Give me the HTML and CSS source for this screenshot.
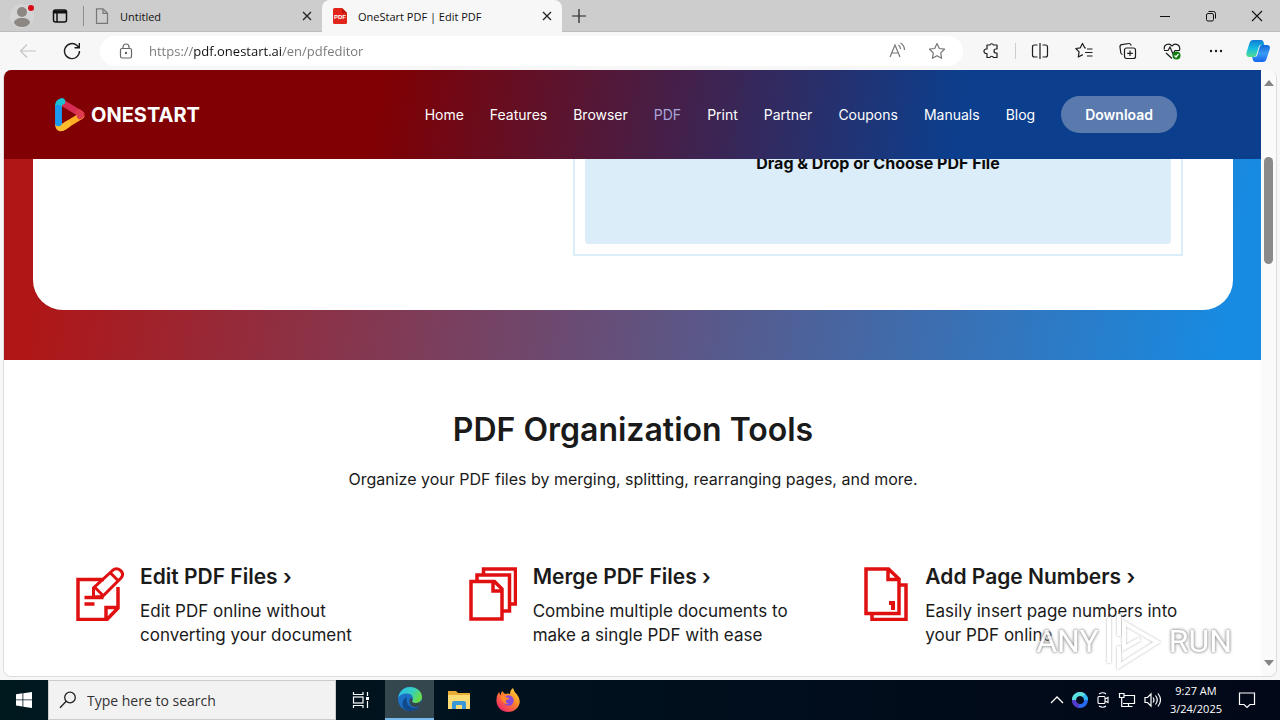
FILE: index.html
```html
<!DOCTYPE html>
<html lang="en">
<head>
<meta charset="utf-8">
<title>OneStart PDF | Edit PDF</title>
<link rel="stylesheet" href="styles.css">
</head>
<body>
<div class="titlebar">
  <button class="profile" aria-label="Profile">
    <svg width="32" height="28" viewBox="0 0 32 28"><circle cx="16" cy="14" r="12" fill="#d4d4d4"/><circle cx="16" cy="10" r="5" fill="#8c8783"/><path d="M8 21c0-3 3-5 8-5s8 2 8 5c-2 3-5 4-8 4s-6-1-8-4z" fill="#8c8783"/><circle cx="25" cy="6" r="3" fill="#d90b17"/></svg>
  </button>
  <button class="tab-actions" aria-label="Tab actions">
    <svg width="16" height="16" viewBox="0 0 16 16" fill="none" stroke="#111" stroke-width="1.5"><rect x="1.5" y="2" width="13" height="12" rx="2"/><path d="M1.500 4h13" stroke-width="3"/><path d="M5 4v10"/></svg>
  </button>
  <span class="divider"></span>
  <div class="tab">
    <svg width="14" height="16" viewBox="0 0 14 16" fill="none" stroke="#777" stroke-width="1.200"><path d="M1.500 .8h6.500l4.500 4.500v10h-11zM8 .8v4.500h4.500"/></svg>
    <span class="tab-title">Untitled</span>
    <button class="close" aria-label="Close tab"><svg width="10" height="10" viewBox="0 0 10 10" stroke="#222" stroke-width="1.300"><path d="M1 1l8 8M9 1l-8 8"/></svg></button>
  </div>
  <div class="tab active">
    <svg width="14" height="16" viewBox="0 0 14 16"><path d="M0 1.500Q0 0 1.500 0H9l5 5v9.500q0 1.500-1.500 1.500h-11Q0 16 0 14.500z" fill="#e1251b"/><path d="M9 0v5h5z" fill="#ba150f"/><text x="7" y="10.500" class="pdf-mark">PDF</text></svg>
    <span class="tab-title">OneStart PDF | Edit PDF</span>
    <button class="close" aria-label="Close tab"><svg width="10" height="10" viewBox="0 0 10 10" stroke="#222" stroke-width="1.300"><path d="M1 1l8 8M9 1l-8 8"/></svg></button>
  </div>
  <button class="new-tab" aria-label="New tab"><svg width="14" height="14" viewBox="0 0 14 14" stroke="#222" stroke-width="1.200"><path d="M7 0v14M0 7h14"/></svg></button>
  <div class="window-controls">
    <button aria-label="Minimize"><svg width="12" height="12" viewBox="0 0 12 12" stroke="#111"><path d="M1 6.500h10"/></svg></button>
    <button aria-label="Restore"><svg width="12" height="12" viewBox="0 0 12 12" fill="none" stroke="#111"><rect x="1.500" y="3.500" width="7" height="7.500" rx="1.500"/><path d="M3.500 1.500h5q2 0 2 2v5"/></svg></button>
    <button aria-label="Close"><svg width="12" height="12" viewBox="0 0 12 12" stroke="#111" stroke-width="1.100"><path d="M1 1l10 10M11 1L1 11"/></svg></button>
  </div>
</div>

<div class="toolbar">
  <button aria-label="Back"><svg width="18" height="16" viewBox="0 0 18 16" fill="none" stroke="#c4c4c4" stroke-width="1.200"><path d="M17 8H2M8 1.500L1.500 8 8 14.500"/></svg></button>
  <button aria-label="Refresh"><svg width="18" height="18" viewBox="0 0 18 18" fill="none" stroke="#1c1c1c" stroke-width="1.400"><path d="M16.500 9a7.500 7.500 0 1 1-2.500-5.500L16 5.500M16.300 1v4.800h-4.800"/></svg></button>
  <div class="address">
    <svg width="14" height="16" viewBox="0 0 14 16" fill="none" stroke="#666" stroke-width="1.200"><rect x="1.500" y="5.500" width="11" height="9.500" rx="1.500"/><path d="M4 5.500V4a3 3 0 0 1 6 0v1.500"/><circle cx="7" cy="10" r=".6" fill="#666"/></svg>
    <input type="text" class="url" aria-label="Address" value="https://pdf.onestart.ai/en/pdfeditor">
    <button aria-label="Read aloud"><svg width="18" height="18" viewBox="0 0 18 18" fill="none" stroke="#767676" stroke-width="1.200"><path d="M2 15L7 3l5 12M4 11h6M10.500 3q2 1.500 2 4M12.500 1q4 2.500 4 7"/></svg></button>
    <button aria-label="Add to favorites"><svg width="18" height="18" viewBox="0 0 18 18" fill="none" stroke="#767676" stroke-width="1.200" stroke-linejoin="round"><path d="M9 1.500l2.300 5 5.200.7-3.800 3.700.9 5.400L9 13.700l-4.600 2.600.9-5.400L1.500 7.200l5.200-.7z"/></svg></button>
  </div>
  <div class="tools">
    <button aria-label="Extensions"><svg width="18" height="18" viewBox="0 0 18 18" fill="none" stroke="#1c1c1c" stroke-width="1.200" stroke-linejoin="round"><path d="M5 3h2.800a2 2 0 0 1 3.700 0H15v4h-1a2 2 0 0 0 0 4h1v4.500h-3.500a2 2 0 0 0-3.700 0H5v-4H4.200a2.200 2.200 0 0 1 0-4.500H5z"/></svg></button>
    <span class="divider light"></span>
    <button aria-label="Split screen"><svg width="18" height="18" viewBox="0 0 18 18" fill="none" stroke="#1c1c1c" stroke-width="1.200"><path d="M6.500 3H3.500Q1.500 3 1.500 5v8q0 2 2 2h3M11.500 3h3q2 0 2 2v8q0 2-2 2h-3M9 1v16"/></svg></button>
    <button aria-label="Favorites"><svg width="18" height="18" viewBox="0 0 18 18" fill="none" stroke="#1c1c1c" stroke-width="1.200" stroke-linejoin="round"><path d="M11 6L9.700 5.800 7.500 1.500 5.300 5.800.8 6.500l3.300 3.300-.8 5.200 4.500-2.400M12 7h5.500M10 10.500h7.500M12 14h5.500"/></svg></button>
    <button aria-label="Collections"><svg width="18" height="18" viewBox="0 0 18 18" fill="none" stroke="#1c1c1c" stroke-width="1.200"><rect x="5.500" y="6" width="11" height="10.500" rx="2"/><path d="M11 8.500v5.500M8.200 11.300h5.600M3.500 12.500Q2 12 1.700 10.500L1 5Q.8 3 2.800 2.700l7-1.200q2-.2 2.400 2.200"/></svg></button>
    <button aria-label="Browser essentials"><svg width="18" height="18" viewBox="0 0 18 18" fill="none" stroke="#1c1c1c" stroke-width="1.200"><path d="M1.500 7.500C0 3 6 0 9 4c3-4 9-1 7.500 4M1 8.500h4L7 5l3 7 2-3.500h5M3 11l6 5.500"/><circle cx="13.500" cy="13.500" r="4" fill="#107c10" stroke="none"/><path d="M11.500 13.500l1.500 1.500 2.500-3" stroke="#fff"/></svg></button>
    <button aria-label="Settings and more"><svg width="18" height="18" viewBox="0 0 18 18" fill="#1c1c1c"><circle cx="4" cy="9" r="1.200"/><circle cx="9" cy="9" r="1.200"/><circle cx="14" cy="9" r="1.200"/></svg></button>
    <button aria-label="Copilot"><svg width="24" height="24" viewBox="0 0 24 24"><defs><linearGradient id="cpa" x2="0" y2="1"><stop stop-color="#107ad5"/><stop offset=".5" stop-color="#16bce0"/><stop offset="1" stop-color="#54dd91"/></linearGradient><linearGradient id="cpb" x2="0" y2="1"><stop stop-color="#0e67d8"/><stop offset=".5" stop-color="#3a9bf5"/><stop offset="1" stop-color="#1667ee"/></linearGradient></defs><path d="M7 1h8q2 0 2.600 2l.7 3h-3q-2 0-2.600 2l-2.300 8q-.6 2-2.600 2H3q-3 0-2.600-4L3.500 4Q4.500 1 7 1z" fill="url(#cpa)"/><path d="M17 23H9.500q-2 0-2.600-2L6.200 18h2.500q2 0 2.600-2l2.300-8q.6-2 2.600-2H21q3.500 0 2.800 4L20.500 20q-1 3-3.500 3z" fill="url(#cpb)"/></svg></button>
  </div>
</div>

<div class="viewport">
  <main class="page">
    <header class="site-header">
      <a href="#" class="logo">
        <svg width="32" height="34" viewBox="0 0 32 34"><g fill="none" stroke-width="6.500" stroke-linecap="round" stroke-linejoin="round"><path d="M8 4.500L27 16" stroke="#d72d55"/><path d="M27 18L8 29.500" stroke="#ffae24"/><path d="M4.500 27V7q0-2.500 3-3.500" stroke="#1b98ef"/><path d="M4.500 8.500q0-4 3.500-5" stroke="#1ac3cf"/><path d="M4.500 27.500q1 4.500 6 1L14 26" stroke="#ffbc2d"/><path d="M4.500 25V10" stroke="#1b98ef"/><path d="M25 14.500q3.500 2 1 3.500" stroke="#e03a50"/></g></svg>
        <span>ONESTART</span>
      </a>
      <nav class="nav">
        <a href="#">Home</a><a href="#">Features</a><a href="#">Browser</a><a href="#" class="current">PDF</a><a href="#">Print</a><a href="#">Partner</a><a href="#">Coupons</a><a href="#">Manuals</a><a href="#">Blog</a>
        <button class="download">Download</button>
      </nav>
    </header>
    <section class="hero">
      <div class="hero-card">
        <div class="drop-frame"><button class="drop-zone">Drag &amp; Drop or Choose PDF File</button></div>
      </div>
    </section>
    <section class="organize">
      <h1>PDF Organization Tools</h1>
      <p class="lead">Organize your PDF files by merging, splitting, rearranging pages, and more.</p>
      <div class="features">
        <article class="feature">
          <svg width="48" height="54" viewBox="0 0 48 54" fill="none" stroke="#e01010" stroke-width="3.500"><path d="M28 12.500H2v40h29L42 41V20M30 52V40.500h12M8.500 30.500h19M8.500 37h10"/><path d="M17.500 30v-9L36.500 3.500q4-3.500 8 0t.5 7.500L26.500 29.500zM34 5.500l8.500 8.500M19 20.500l8 8" stroke-width="3"/></svg>
          <div><h2><a href="#">Edit PDF Files ›</a></h2><p>Edit PDF online without converting your document</p></div>
        </article>
        <article class="feature">
          <svg width="48" height="54" viewBox="0 0 48 54" fill="none" stroke="#e01010" stroke-width="3.500"><path d="M2 14.500h23.500L33 22v30H2zM24 15v9h9M8 14V8h32.500v36H34M14.500 8V2h32v35H41"/></svg>
          <div><h2><a href="#">Merge PDF Files ›</a></h2><p>Combine multiple documents to make a single PDF with ease</p></div>
        </article>
        <article class="feature">
          <svg width="48" height="54" viewBox="0 0 48 54" fill="none" stroke="#e01010" stroke-width="3.500"><path d="M5 2h22.500L38 12v34.500H5zM27 2v10.500h11M39 18h6v34.500H11V47"/><path d="M28 36h4v7" stroke-width="4"/></svg>
          <div><h2><a href="#">Add Page Numbers ›</a></h2><p>Easily insert page numbers into your PDF online</p></div>
        </article>
      </div>
    </section>
  </main>
  <div class="scrollbar">
    <svg width="10" height="6" viewBox="0 0 10 6"><path d="M5 0l5 6H0z" fill="#858585"/></svg>
    <div class="track"><div class="thumb"></div></div>
    <svg width="10" height="6" viewBox="0 0 10 6"><path d="M0 0h10L5 6z" fill="#858585"/></svg>
  </div>
</div>

<div class="taskbar">
  <button class="task" aria-label="Start"><svg width="16" height="16" viewBox="0 0 16 16" fill="#fff"><path d="M0 2.200l6.500-.9v6.200H0zM7.300 1.200L16 0v7.500H7.300zM0 8.300h6.500v6.200L0 13.600zM7.300 8.300H16V16l-8.700-1.300z"/></svg></button>
  <label class="search">
    <svg width="18" height="18" viewBox="0 0 18 18" fill="none" stroke="#222" stroke-width="1.300"><circle cx="11" cy="6.500" r="5.300"/><path d="M7.200 10.300L1 16.800"/></svg>
    <input type="text" placeholder="Type here to search" aria-label="Search">
  </label>
  <button class="task" aria-label="Task view"><svg width="18" height="18" viewBox="0 0 18 18" fill="none" stroke="#fff" stroke-width="1.200"><path d="M1.500 1v2.500h9.500V1M1.500 17v-2.500h9.500V17M15.500 1v4M15.500 10v7"/><rect x="1.500" y="6" width="9.500" height="6"/><path d="M14 7.500h3" stroke-width="3"/></svg></button>
  <button class="task running" aria-label="Microsoft Edge"><svg width="24" height="24" viewBox="0 0 24 24"><defs><linearGradient id="eg" x2="1" y2=".4"><stop stop-color="#2eb8ef"/><stop offset=".6" stop-color="#35cfc0"/><stop offset="1" stop-color="#66dc4c"/></linearGradient></defs><circle cx="12" cy="12" r="12" fill="#1b6fc4"/><path d="M.2 11C1 4.500 6 0 12 0c7 0 12 4.500 12 10 0 4-3 6-6 6-4 0-4.500-1.500-3.500-3 1.500-3-1-6.500-5.500-6.500C4.500 6.500 1 8.500.2 11z" fill="url(#eg)"/><path d="M9 10c-2 5 2 11 8 11 2 0 4-.8 5-1.700C20 22 17 24 12.500 24 6 24 4 19 4.500 16 5 12.500 7 11 9 10z" fill="#114a8b"/><path d="M14.500 13c-1 1.500-.5 3 3.500 3 2.500 0 4.500-1 5.500-3l-.5 5c-2 2-4.500 2.500-7 2-4-.8-5.500-5-4-8 1-1.500 3-1 2.500 1z" fill="#34474e"/></svg></button>
  <button class="task" aria-label="File Explorer"><svg width="22" height="19" viewBox="0 0 22 19"><path d="M0 0h8l2 2h12v16H0z" fill="#e9ad36"/><path d="M0 4h22v14H0z" fill="#fbdb73"/><path d="M4 18V12q0-2 2-2h10q2 0 2 2v6h-4v-4H8v4z" fill="#3a97d8"/></svg></button>
  <button class="task" aria-label="Firefox"><svg width="24" height="24" viewBox="0 0 24 24"><defs><linearGradient id="ff" x1="1" x2=".2" y2="1"><stop stop-color="#ffe83d"/><stop offset=".45" stop-color="#ff8b28"/><stop offset="1" stop-color="#f0206b"/></linearGradient></defs><path d="M3 4l1.500 3L6 3l3 3q3-1 5 0 0-4 3-6 1 4 4 6.500 3.500 4.500 2.500 9C22 21 17.500 24 12 24S1 20 .5 13.500Q0 8 3 4z" fill="url(#ff)"/><circle cx="12.500" cy="12.500" r="5.200" fill="#8848d8"/><path d="M4.500 8q4-1 6 1.500l3 .5q-1 2-3.500 2-1 3 2.500 3.800Q9 17 7 14 5 11.500 4.500 8z" fill="#ff8928"/></svg></button>
  <div class="tray">
    <button aria-label="Show hidden icons"><svg width="14" height="8" viewBox="0 0 14 8" fill="none" stroke="#fff" stroke-width="1.300"><path d="M1 7l6-6 6 6"/></svg></button>
    <button aria-label="OneStart"><svg width="16" height="16" viewBox="0 0 16 16" fill="none" stroke-width="4"><circle cx="8" cy="8" r="6" stroke="#2769ef"/><path d="M2 8a6 6 0 0 1 10-4.500" stroke="#5ce0dc"/><path d="M12 3.500A6 6 0 0 1 14 8" stroke="#2db8ef"/><path d="M2 8a6 6 0 0 0 5 6" stroke="#5539c9"/></svg></button>
    <button aria-label="Meet now"><svg width="14" height="16" viewBox="0 0 14 16" fill="none" stroke="#fff" stroke-width="1.100"><rect x="2" y="4.500" width="7" height="7" rx="1"/><path d="M9 7l3-1.500v5L9 9M3 2q4-2.500 7 0M3 14q4 2.500 7 0"/></svg></button>
    <button aria-label="Network"><svg width="18" height="16" viewBox="0 0 18 16" fill="none" stroke="#fff" stroke-width="1.200"><path d="M6.500 3.500h10v8H5M10.500 11.500v3M7 14.500h7.500M1.500 1.500h4.500v4H1.500zM3.700 5.500v9H7"/></svg></button>
    <button aria-label="Volume"><svg width="18" height="16" viewBox="0 0 18 16" fill="none" stroke="#fff" stroke-width="1.200"><path d="M1 5.500h2.500L7 2v12l-3.500-3.500H1zM9 5.500q2 2.500 0 5M11.500 3.500q3.500 4.500 0 9M14 1.500q5 6.500 0 13"/></svg></button>
    <div class="clock"><span>9:27 AM</span><span>3/24/2025</span></div>
    <button class="notify" aria-label="Notifications"><svg width="18" height="18" viewBox="0 0 18 18" fill="none" stroke="#fff" stroke-width="1.200"><path d="M1.500 2h15v11.500H12L9 16.500l-3-3H1.500z"/></svg></button>
  </div>
</div>

<div class="watermark"><span>ANY</span><svg width="56" height="60" viewBox="0 0 56 60" fill="none" stroke="#fff" stroke-width="4"><path d="M3 6v46M13 3v22M13 35v20l38-24L18 12v25l16-9"/></svg><span>RUN</span></div>
</body>
</html>
```
FILE: styles.css
```css
* { box-sizing: border-box; }
body {
  margin: 0;
  height: 100vh;
  display: flex;
  flex-direction: column;
  overflow: hidden;
  background: #f7f7f7;
  color: #1a1a1a;
  font-family: "Open Sans", "Noto Sans", sans-serif;
  font-size: 12px;
}
button { border: 0; padding: 0; background: none; font: inherit; color: inherit; display: flex; align-items: center; justify-content: center; }
input { border: 0; outline: 0; background: none; font: inherit; min-width: 0; }
a { color: inherit; text-decoration: none; }
svg { display: block; flex: none; }

.titlebar { flex: none; height: 32px; display: flex; align-items: center; background: #cdcdcd; box-shadow: inset 0 -1px #bdbdbd; padding-left: 6px; }
.tab-actions { margin-left: 14px; }
.divider { width: 1px; height: 20px; background: #909090; }
.titlebar .divider { margin-left: 15px; }
.tab { display: flex; align-items: center; gap: 11px; height: 32px; width: 238px; padding: 0 10px 0 11px; }
.tab-title { flex: 1; color: #111; font-size: 11px; white-space: nowrap; }
.tab.active { background: #f7f7f7; border-radius: 8px 8px 0 0; width: 240px; }
.close { width: 10px; height: 16px; }
.pdf-mark { font: bold 6px "Liberation Sans", sans-serif; fill: #fff; text-anchor: middle; }
.new-tab { margin-left: 10px; }
.window-controls { margin-left: auto; display: flex; }
.window-controls button { width: 46px; height: 32px; }

.toolbar { flex: none; height: 38px; display: flex; align-items: center; padding: 0 10px 0 19px; gap: 26px; }
.address { flex: 1; height: 30px; display: flex; align-items: center; gap: 22px; background: #fff; border-radius: 15px; padding: 0 17px 0 19px; margin-left: -7px; }
.address > svg { margin-right: -6px; }
.url {
  flex: 1;
  padding: 0;
  font-size: 13px;
  background: linear-gradient(90deg, #767676 45px, #111 45px, #111 133px, #767676 133px);
  -webkit-background-clip: text;
  background-clip: text;
  color: transparent;
}
.tools { display: flex; align-items: center; gap: 26px; margin-left: -7px; }
.tools .divider { height: 16px; margin: 0 -11px; background: #ccc; }
.tools button:last-child { margin-left: -5px; }

.viewport { flex: 1; min-height: 0; display: flex; margin: 0 3px 3px; border: 1px solid #dcdcdc; border-top: 0; border-radius: 8px; overflow: hidden; background: #fff; }
.page { flex: 1; min-width: 0; overflow: hidden; font-family: Inter, "Open Sans", sans-serif; font-size: 16px; }
.scrollbar { flex: none; width: 15px; display: flex; flex-direction: column; align-items: center; padding: 10px 0; background: #fafafa; }
.track { flex: 1; padding-top: 71px; }
.thumb { width: 9px; height: 107px; border-radius: 5px; background: #8a8a8a; }

.site-header { position: relative; z-index: 1; height: 89px; padding: 0 84px 0 50px; display: flex; align-items: center; justify-content: space-between; background: linear-gradient(100deg, #800003 30%, #0b3f8e 76%); color: #fff; }
.logo { display: flex; align-items: center; gap: 5px; font-family: Inter, sans-serif; font-size: 20px; font-weight: 700; }
.nav { display: flex; align-items: center; gap: 26px; font-size: 14px; }
.nav .current { color: #a9a5dc; }
.download { height: 37px; padding: 0 24px; border-radius: 19px; background: #5a7aae; font-size: 14px; font-weight: 600; }

.hero { padding: 0 28px 50px 29px; background: linear-gradient(100deg, #b01616 4%, #178be2 97%); }
.hero-card { display: flex; justify-content: flex-end; background: #fff; border-radius: 0 0 30px 30px; padding: 0 50px 54px; }
.drop-frame { width: 610px; margin-top: -90px; padding: 10px; border: 2px solid #dbedf8; }
.drop-zone { width: 100%; height: 163px; border-radius: 4px; background: #dbedf8; color: #0a0a0a; font-size: 16px; font-weight: 700; }

.organize { padding: 49px 28px 0 29px; text-align: center; }
h1, h2, p { margin: 0; }
h1 { font-size: 32px; line-height: 42px; font-weight: 600; }
.lead { margin-top: 16px; line-height: 24px; }
.features { display: grid; grid-template-columns: repeat(3, 1fr); gap: 64px; margin-top: 73px; padding: 0 43px; text-align: left; }
.feature { display: flex; gap: 16px; padding-top: 3px; }
h2 { margin-top: -3px; font-size: 21px; line-height: 26px; font-weight: 600; }
.feature p { margin-top: 9px; font-size: 17px; line-height: 24px; }

.taskbar { flex: none; height: 40px; display: flex; background: linear-gradient(90deg, #00191f, #010e1d 60%, #020817); color: #fff; }
.task { width: 49px; }
.task:first-child { width: 48px; }
.running { background: #34474e; border-bottom: 2px solid #76b9ed; }
.search { width: 288px; display: flex; align-items: center; gap: 10px; padding: 0 10px; background: #f2f2f2; border: 1px solid #ccc; }
.search input { flex: 1; padding: 0; font-size: 14px; }
.search input::placeholder { color: #333; opacity: 1; }
.tray { margin-left: auto; display: flex; align-items: center; gap: 8px; padding-right: 24px; }
.clock { display: flex; flex-direction: column; align-items: center; line-height: 18px; font-size: 11px; }
.notify { margin-left: 8px; }

.watermark { position: absolute; right: 48px; bottom: 49px; display: flex; align-items: center; gap: 7px; color: #fff; opacity: .9; font: 32px Roboto, "Open Sans", sans-serif; text-shadow: 0 0 3px #888; filter: drop-shadow(0 0 1px #aaa); pointer-events: none; }
```
